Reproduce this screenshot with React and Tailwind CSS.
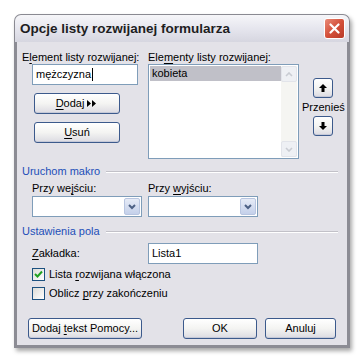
import React from 'react';

const font = { fontFamily: 'Tahoma, "Liberation Sans", sans-serif' };

function U({ children }) {
  return <span className="underline underline-offset-2">{children}</span>;
}

function XpButton({ className = '', children }) {
  return (
    <div
      className={`flex shrink-0 items-center justify-center whitespace-nowrap rounded-[3px] border border-[#3c5a8c] bg-gradient-to-b from-white via-[#f4f4f2] to-[#dcdbe2] text-[11px] text-black shadow-[inset_0_-1px_0_#c5c9d8] ${className}`}
    >
      {children}
    </div>
  );
}

function Combo() {
  return (
    <div className="flex h-[21px] w-[110px] border border-[#7f9db9] bg-white p-[1px]">
      <div className="flex-1" />
      <div className="flex w-[16px] items-center justify-center rounded-[2px] border border-[#b8c5e0] bg-gradient-to-b from-[#e6ebf6] to-[#c4d0ea]">
        <svg width="8" height="6" viewBox="0 0 8 6">
          <path d="M1 1 L4 4 L7 1" fill="none" stroke="#4d6185" strokeWidth="2" />
        </svg>
      </div>
    </div>
  );
}

function Check({ checked, children }) {
  return (
    <div className="flex h-[13px] items-center gap-[4px] whitespace-nowrap">
      <div className="flex h-[13px] w-[13px] items-center justify-center border border-[#1c5180] bg-gradient-to-br from-[#dcdcd7] to-white">
        {checked && (
          <svg width="9" height="9" viewBox="0 0 9 9">
            <path d="M1 4 L3.5 6.5 L8 1.5" fill="none" stroke="#21a121" strokeWidth="2" />
          </svg>
        )}
      </div>
      <span>{children}</span>
    </div>
  );
}

function Section({ title }) {
  return (
    <div className="mr-[9px] flex items-center gap-[6px] whitespace-nowrap text-[#1d4fb8]">
      <span>{title}</span>
      <div className="h-[1px] flex-1 bg-[#c2c1c8] shadow-[0_1px_0_#fff]" />
    </div>
  );
}

function MoveButton({ up }) {
  return (
    <XpButton className="h-[20px] w-[20px]">
      <svg width="8" height="8" viewBox="0 0 8 8">
        {up ? (
          <path d="M4 0 L8 4 L5.5 4 L5.5 8 L2.5 8 L2.5 4 L0 4 Z" fill="#000" />
        ) : (
          <path d="M4 8 L8 4 L5.5 4 L5.5 0 L2.5 0 L2.5 4 L0 4 Z" fill="#000" />
        )}
      </svg>
    </XpButton>
  );
}

export default function App() {
  return (
    <div className="h-[362px] w-[364px] overflow-hidden bg-white pl-[14px] pt-[14px] text-[11px] leading-[13px] text-black" style={font}>
      <div className="flex h-[334px] w-[336px] flex-col rounded-t-[7px] shadow-[2px_3px_4px_rgba(0,0,0,0.35)]">
        {/* Title bar */}
        <div className="flex h-[28px] shrink-0 items-center justify-between rounded-t-[7px] border border-b-0 border-[#8a8a92] bg-gradient-to-b from-[#f6f6f9] via-[#e6e6ee] to-[#d6d6e0] pl-[5px] pr-[4px]">
          <span className="whitespace-nowrap text-[13.5px] font-bold leading-[16px] text-[#1e1e22]" style={{ fontFamily: '"Liberation Sans", sans-serif' }}>
            Opcje listy rozwijanej formularza
          </span>
          <div className="flex h-[21px] w-[21px] items-center justify-center rounded-[3px] border border-white bg-gradient-to-br from-[#e88a78] via-[#d4503a] to-[#b83a28]">
            <svg width="11" height="11" viewBox="0 0 11 11">
              <path d="M1.5 1.5 L9.5 9.5 M9.5 1.5 L1.5 9.5" stroke="#fff" strokeWidth="2.2" strokeLinecap="round" />
            </svg>
          </div>
        </div>

        {/* Client */}
        <div className="flex min-h-0 flex-1 flex-col whitespace-nowrap border-x-[3px] border-b-[3px] border-[#8c8c94] bg-[#e3e2e8] pl-[5px] pt-[9px]">
          {/* Top section */}
          <div className="flex">
            <div className="flex w-[126px] shrink-0 flex-col">
              <span>
                E<U>l</U>ement listy rozwijanej:
              </span>
              <div className="ml-[10px] flex h-[21px] w-[106px] items-center border border-[#7f9db9] bg-white pl-[3px]">
                mężczyzna<span className="ml-[1px] h-[13px] w-[1px] bg-black" />
              </div>
              <XpButton className="ml-[12px] mt-[8px] h-[21px] w-[86px] gap-[3px]">
                <span>
                  <U>D</U>odaj
                </span>
                <svg width="11" height="7" viewBox="0 0 11 7">
                  <path d="M0 0 L4 3.5 L0 7 Z M5 0 L9 3.5 L5 7 Z" fill="#000" />
                </svg>
              </XpButton>
              <XpButton className="ml-[12px] mt-[8px] h-[21px] w-[86px]">
                <span>
                  <U>U</U>suń
                </span>
              </XpButton>
            </div>
            <div className="flex shrink-0 flex-col">
              <span>
                Ele<U>m</U>enty listy rozwijanej:
              </span>
              <div className="flex h-[95px] w-[151px] border border-[#7f9db9] bg-white p-[1px]">
                <div className="flex-1">
                  <div className="h-[15px] bg-[#c0c0c8] pl-[2px] leading-[15px]">kobieta</div>
                </div>
                <div className="flex w-[16px] flex-col justify-between bg-[#f5f5f2]">
                  <div className="flex h-[16px] items-center justify-center rounded-[2px] border border-[#e2e4ea] bg-[#eef0f4]">
                    <svg width="8" height="5" viewBox="0 0 8 5">
                      <path d="M1 4 L4 1 L7 4" fill="none" stroke="#c9ccd3" strokeWidth="1.6" />
                    </svg>
                  </div>
                  <div className="flex h-[16px] items-center justify-center rounded-[2px] border border-[#e2e4ea] bg-[#eef0f4]">
                    <svg width="8" height="5" viewBox="0 0 8 5">
                      <path d="M1 1 L4 4 L7 1" fill="none" stroke="#c9ccd3" strokeWidth="1.6" />
                    </svg>
                  </div>
                </div>
              </div>
            </div>
            <div className="ml-[3px] mt-[27px] flex flex-col items-center">
              <MoveButton up />
              <span className="mt-[3px] mb-[2px]">Przenieś</span>
              <MoveButton />
            </div>
          </div>

          {/* Macro */}
          <div className="mt-[6px]">
            <Section title="Uruchom makro" />
          </div>
          <div className="mt-[4px] flex">
            <div className="ml-[10px] flex w-[116px] flex-col gap-[1px]">
              <span>
                Przy we<U>j</U>ściu:
              </span>
              <Combo />
            </div>
            <div className="flex flex-col gap-[1px]">
              <span>
                Przy <U>w</U>yjściu:
              </span>
              <Combo />
            </div>
          </div>

          {/* Field settings */}
          <div className="mt-[8px]">
            <Section title="Ustawienia pola" />
          </div>
          <div className="mt-[5px] flex items-center">
            <span className="ml-[10px] w-[116px]">
              <U>Z</U>akładka:
            </span>
            <div className="flex h-[21px] w-[110px] items-center border border-[#7f9db9] bg-white pl-[3px]">Lista1</div>
          </div>
          <div className="ml-[10px] mt-[4px] flex flex-col gap-[6px]">
            <Check checked>
              Lista <U>r</U>ozwijana włączona
            </Check>
            <Check>
              Oblicz <U>p</U>rzy zakończeniu
            </Check>
          </div>

          {/* Buttons */}
          <div className="mt-[18px] flex">
            <XpButton className="ml-[6px] h-[21px] w-[114px]">
              <span>
                Dodaj <U>t</U>ekst Pomocy...
              </span>
            </XpButton>
            <XpButton className="ml-[41px] h-[21px] w-[74px]">OK</XpButton>
            <XpButton className="ml-[8px] h-[21px] w-[71px]">Anuluj</XpButton>
          </div>
        </div>
      </div>
    </div>
  );
}
